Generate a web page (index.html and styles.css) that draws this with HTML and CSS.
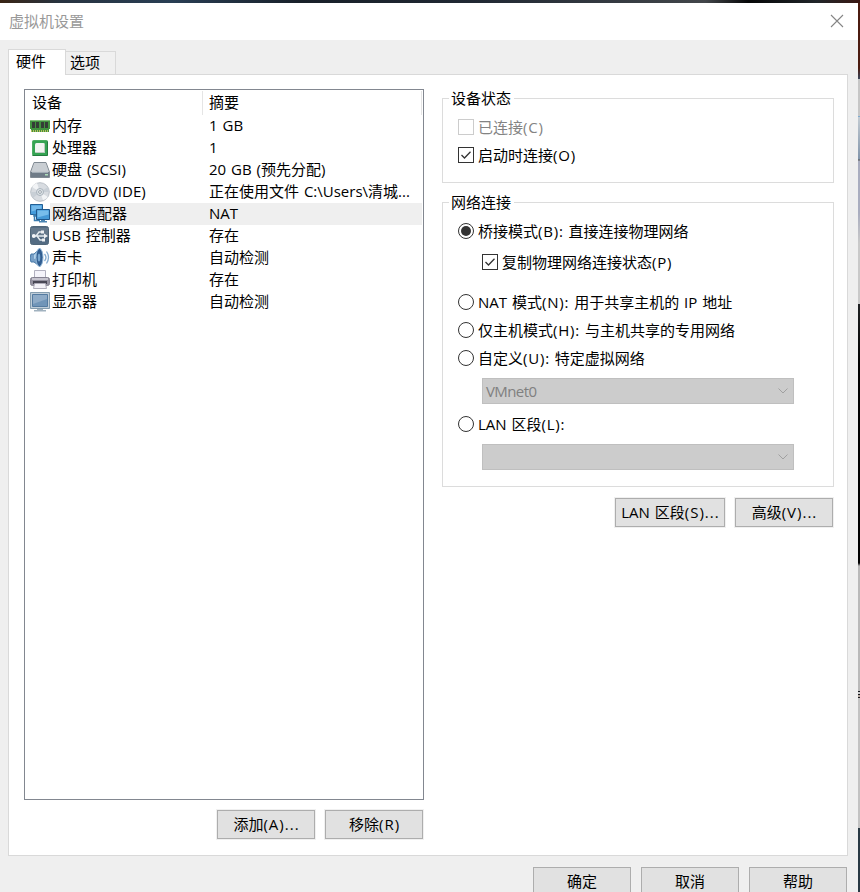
FILE: index.html
```html
<!DOCTYPE html>
<html lang="zh-CN">
<head>
<meta charset="utf-8">
<title>虚拟机设置</title>
<link rel="stylesheet" href="styles.css">
</head>
<body>
<div class="desktop">
<main class="window">
  <header class="titlebar">
    <span>虚拟机设置</span>
    <svg class="close" width="14" height="14" viewBox="0 0 14 14"><path d="M1 1l12 12M13 1L1 13" stroke="#858585" stroke-width="1.1" fill="none"/></svg>
  </header>
  <nav class="tabs"><div class="tab active">硬件</div><div class="tab">选项</div></nav>
  <section class="panel">
    <div class="left">
      <div class="list">
        <div class="row head"><span class="name">设备</span><span class="sum">摘要</span></div>
        <div class="row">
          <svg class="icon" viewBox="0 0 20 20"><path d="M0 4h20v9h-1v3H1v-3H0z" fill="#41923f"/><path d="M0 4h20v1H0z" fill="#82bd7c"/><path d="M2 6h3v6H2zM6 6h3v6H6zM11 6h3v6h-3zM15 6h3v6h-3z" fill="#343d37"/><path d="M1 15h18" stroke="#b9bd5d" stroke-width="2" stroke-dasharray="1 1"/></svg>
          <span class="name">内存</span><span class="sum">1 GB</span></div>
        <div class="row">
          <svg class="icon" viewBox="0 0 20 20"><rect x="2.500" y="2.500" width="15" height="15" rx="1" fill="#35a353" stroke="#4cae62"/><path d="M2.500 17.500h15v-14" fill="none" stroke="#237c3e"/><rect x="5" y="5" width="10" height="10" rx="1.500" fill="#f1f4f1"/><path d="M6 14.500h8.500V6" fill="none" stroke="#bfcbc1"/></svg>
          <span class="name">处理器</span><span class="sum">1</span></div>
        <div class="row">
          <svg class="icon" viewBox="0 0 20 20"><path d="M4 2.500h12L19.500 12v5.500H.5V12z" fill="#c0c6cb" stroke="#818a93"/><path d="M4.500 3h11l3 8.500h-17z" fill="#c9ced3"/><path d="M1 12h18v5H1z" fill="#6f7b87"/><path d="M2 12.500h16" stroke="#a3adb6"/><path d="M15 14h3v1.500h-3z" fill="#aeddb9"/></svg>
          <span class="name">硬盘 (SCSI)</span><span class="sum">20 GB (预先分配)</span></div>
        <div class="row">
          <svg class="icon" viewBox="0 0 20 20"><circle cx="10" cy="10" r="9.300" fill="#d8dce1" stroke="#b9bfc6"/><path d="M10 10L2 5a9 9 0 0 1 5-4zM10 10l8 5a9 9 0 0 1-5 3z" fill="#f2f4f6"/><path d="M10 10L18 5l1 5zM10 10L1 10l2 6z" fill="#c8cfd6"/><circle cx="10" cy="10" r="3.500" fill="#dfe4e8" stroke="#aab4bd"/><circle cx="10" cy="10" r="1.400" fill="#fff" stroke="#98a3ac"/></svg>
          <span class="name">CD/DVD (IDE)</span><span class="sum">正在使用文件 C:\Users\清城...</span></div>
        <div class="row selected">
          <svg class="icon" viewBox="0 0 20 20"><path d="M.5.500h12v10H.5z" fill="#439bdb" stroke="#235f95"/><path d="M1.500 1.500h10v3l-10 3z" fill="#73b8e9"/><path d="M4 11h4v1H4zM4.500 12v4.500H10" fill="none" stroke="#397caf" stroke-width="1.500"/><path d="M6.500 5.500h13v10h-13z" fill="#4599d6" stroke="#20588c"/><path d="M7.500 6.500h11v4l-11 3z" fill="#77bdeb"/><path d="M11 16h4v1h2v1.500H9V17h2z" fill="#4b84b1"/></svg>
          <span class="name">网络适配器</span><span class="sum">NAT</span></div>
        <div class="row">
          <svg class="icon" viewBox="0 0 20 20"><rect x=".5" y=".5" width="18" height="18" rx="2" fill="#536b82" stroke="#516779"/><path d="M1 2h17v7H1z" fill="#65798c"/><path d="M3 10h12M6 10l3-4h3M7 10l3 4h3" fill="none" stroke="#e5ebef" stroke-width="1.400"/><circle cx="3.800" cy="10" r="2" fill="#f3f5f7"/><path d="M14 7.500l4 2.500-4 2.500zM11 4.500h3v3h-3zM12 12.500h3v3h-3z" fill="#edf0f3"/></svg>
          <span class="name">USB 控制器</span><span class="sum">存在</span></div>
        <div class="row">
          <svg class="icon" viewBox="0 0 20 20"><path d="M1 6h3l6-5.500v18L4 14H1q-2-4 0-8z" fill="#779fc6" stroke="#497aa8"/><path d="M4 7l6-6v8l-6 2z" fill="#b4d4ec"/><ellipse cx="9.500" cy="9.500" rx="3.500" ry="9" fill="#315e91" stroke="#91b6d6"/><ellipse cx="9" cy="9.500" rx="1.300" ry="4" fill="#78a7d0"/><path d="M14.500 6q3 3.500 0 7M16.500 3.500q4 6 0 12" fill="none" stroke="#84abd0" stroke-width="1.300"/></svg>
          <span class="name">声卡</span><span class="sum">自动检测</span></div>
        <div class="row">
          <svg class="icon" viewBox="0 0 20 20"><path d="M4.500.500h11V8h-11z" fill="#f5f4fa" stroke="#b2b1bf"/><rect x=".5" y="7.500" width="19" height="8" rx="2" fill="#94919f" stroke="#858291"/><path d="M2 8h16v2H2z" fill="#c7c5cf"/><path d="M3 11h14v3H3z" fill="#494755"/><path d="M4.500 13.500h11l1 5h-13z" fill="#f3f1f7" stroke="#b0adba"/></svg>
          <span class="name">打印机</span><span class="sum">存在</span></div>
        <div class="row">
          <svg class="icon" viewBox="0 0 20 20"><path d="M.5.500h19v16H.5z" fill="#c0ced9" stroke="#849daf"/><path d="M2.500 2.500h15v12h-15z" fill="#7095b8" stroke="#547ba0"/><path d="M3 3h14v4L3 12z" fill="#8eabc7"/><path d="M7 17h6v1h3v1.500H4V18h3z" fill="#a1b2bf"/></svg>
          <span class="name">显示器</span><span class="sum">自动检测</span></div>
      </div>
      <div class="buttons"><div class="btn">添加<span class="key">(A)...</span></div><div class="btn">移除<span class="key">(R)</span></div></div>
    </div>
    <div class="right">
      <fieldset class="status"><legend>设备状态</legend>
        <div class="opt disabled"><i class="check"></i><span>已连接<span class="key">(C)</span></span></div>
        <div class="opt"><i class="check"><svg viewBox="0 0 14 14"><path d="M2.500 7l3 3 6-6.300" /></svg></i><span>启动时连接<span class="key">(O)</span></span></div>
      </fieldset>
      <fieldset class="network"><legend>网络连接</legend>
        <div class="opt"><i class="radio on"></i><span>桥接模式<span class="key">(B):</span> 直接连接物理网络</span></div>
        <div class="opt sub"><i class="check"><svg viewBox="0 0 14 14"><path d="M2.500 7l3 3 6-6.300" /></svg></i><span>复制物理网络连接状态<span class="key">(P)</span></span></div>
        <div class="opt nat"><i class="radio"></i><span>NAT 模式<span class="key">(N):</span> 用于共享主机的 IP 地址</span></div>
        <div class="opt"><i class="radio"></i><span>仅主机模式<span class="key">(H):</span> 与主机共享的专用网络</span></div>
        <div class="opt"><i class="radio"></i><span>自定义<span class="key">(U):</span> 特定虚拟网络</span></div>
        <div class="select"><span>VMnet0</span><svg width="10" height="6" viewBox="0 0 10 6"><path d="M.5.5L5 5 9.500.5"/></svg></div>
        <div class="opt lan"><i class="radio"></i><span>LAN 区段<span class="key">(L):</span></span></div>
        <div class="select"><span></span><svg width="10" height="6" viewBox="0 0 10 6"><path d="M.5.5L5 5 9.500.5"/></svg></div>
      </fieldset>
      <div class="buttons"><div class="btn wide">LAN 区段<span class="key">(S)...</span></div><div class="btn">高级<span class="key">(V)...</span></div></div>
    </div>
  </section>
  <footer class="buttons footer"><div class="btn">确定</div><div class="btn">取消</div><div class="btn">帮助</div></footer>
</main>
<div class="edge"></div>
</div>
</body>
</html>
```

FILE: styles.css
```css
* { box-sizing: border-box; }
body { margin: 0; width: 860px; height: 892px; overflow: hidden; font: 15px/22px "Open Sans", "Noto Sans CJK SC", sans-serif; word-spacing: 1px; color: #000; }
.desktop { display: grid; grid-template-columns: 858px 2px; height: 892px; padding-top: 3px; overflow: hidden; background: linear-gradient(90deg, #392414 0, #273340 7%, #293e54 20%, #182029 35%, #202833 55%, #42464a 82%, #060708 87%, #202529 95%, #3a1712); }
.window { background: #efefef; height: 889px; overflow: hidden; }
.edge { height: 889px; background: linear-gradient(#4b1b10 0 65px, #3b475b 76px, #c6c6c6 76px 113px, #7eabd0 113px 114px, #c3cbd2 114px, #8295ab 156px, #555 157px, #a9adbf 158px 210px, #c9c9c9 240px 301px, #202224 301px, #000 361px 560px, #b9b9b9 563px 688px, #17191e 688px 689px, #c9c9c9 689px 691px, #17191e 691px 692px, #b5a79e 692px 694px, #17191e 694px 695px, #c2c2c2 695px 825px, #293944 825px); }
.titlebar { height: 37px; padding: 0 14px 0 9px; display: flex; align-items: center; justify-content: space-between; background: #fff; color: #999; }
.titlebar span { padding-bottom: 2px; }
.close { display: block; margin-bottom: 1px; }
.tabs { display: flex; align-items: flex-end; height: 34px; margin-left: 8px; }
.tab { width: 50px; height: 23px; padding-left: 4px; border: 1px solid #d9d9d9; border-width: 1px 1px 0 0; background: #f0f0f0; line-height: 21px; }
.tab.active { width: 58px; height: 26px; margin-bottom: -1px; padding-left: 7px; border-left-width: 1px; background: #fff; line-height: 22px; position: relative; z-index: 1; }
.panel { width: 840px; height: 782px; margin-left: 8px; padding: 14px 13px 0 15px; border: 1px solid #d9d9d9; background: #fff; display: flex; justify-content: space-between; }
.left { width: 400px; }
.list { height: 711px; border: 1px solid #828790; background: #fff; }
.row { display: grid; grid-template-columns: 20px 157px 1fr; height: 22px; padding: 0 1px 0 5px; white-space: nowrap; line-height: 21px; }
.row .name { padding-left: 2px; }
.row .sum { padding-left: 2px; }
.row.selected .name, .row.selected .sum { background: #efefef; }
.row.head { grid-template-columns: 171px 219px; height: 25px; padding: 1px 0 0 7px; line-height: 22px; }
.row.head .name { padding: 0; border-right: 1px solid #e5e5e5; }
.row.head .sum { padding-left: 6px; border-right: 1px solid #e5e5e5; }
.icon { width: 20px; height: 20px; display: block; margin-top: 1px; }
.buttons { display: flex; gap: 10px; justify-content: flex-end; margin-top: 10px; }
.btn { width: 98px; height: 29px; border: 1px solid #adadad; outline: 1px solid #f0f0f0; background: #e1e1e1; text-align: center; line-height: 26px; white-space: nowrap; }
.btn.wide { width: 110px; }
.left .buttons { padding-right: 1px; }
.right { width: 392px; }
fieldset { margin: 0; min-width: 0; border: 1px solid #dcdcdc; padding: 0 0 0 15px; }
legend { padding: 0 3px 0 2px; margin-left: -9px; height: 22px; line-height: 22px; }
.status { height: 96px; margin-top: -2px; }
.network { height: 296px; margin-top: 8px; }
.key { letter-spacing: .8px; }
.btn .key { letter-spacing: 1px; margin-right: -1px; }
.opt { display: flex; align-items: center; gap: 4px; height: 28px; white-space: nowrap; }
.status .opt:nth-of-type(1) { margin-top: 4px; }
.network > .opt:nth-of-type(1) { margin-top: 4px; }
.opt.sub { margin: 3px 0 0 24px; }
.opt.nat { margin-top: 12px; }
.check { width: 16px; height: 16px; border: 1px solid #333; display: block; flex: none; }
.check svg { display: block; width: 14px; height: 14px; }
.check path { fill: none; stroke: #333; stroke-width: 1.3; }
.disabled { color: #838383; }
.disabled .check { border-color: #ccc; }
.radio { width: 16px; height: 16px; border: 1px solid #333; border-radius: 50%; display: grid; place-items: center; flex: none; }
.radio.on::after { content: ""; width: 10px; height: 10px; border-radius: 50%; background: #333; }
.select { width: 312px; height: 26px; margin: 6px 0 6px 24px; padding: 0 5px 0 3px; border: 1px solid #bfbfbf; background: #ccc; color: #808080; display: flex; align-items: center; justify-content: space-between; letter-spacing: -.6px; }
.select path { fill: none; stroke: #a0a0a0; }
.network .opt.lan { margin-top: 6px; }
.right .buttons { margin-top: 11px; padding-right: 1px; }
.footer { margin-top: 11px; padding-right: 11px; }
```
